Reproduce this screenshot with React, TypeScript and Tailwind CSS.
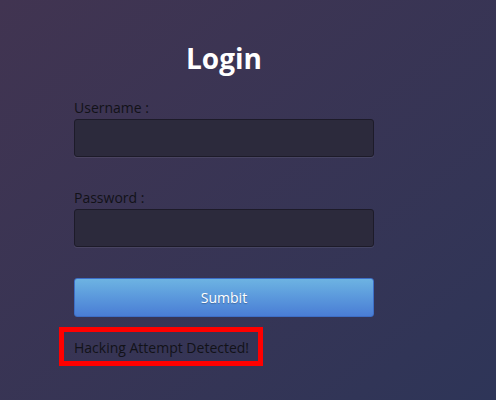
export default function App() {
  return (
    <div
      className="min-h-[400px] w-full bg-gradient-to-br from-[#413451] to-[#2e3558] text-[14px] text-[#121218]"
      style={{ fontFamily: '"Open Sans", "Noto Sans", sans-serif' }}
    >
      <div className="ml-[74px] w-[300px] pt-[36px]">
        <h1 className="text-center text-[28px] font-bold leading-[44px] text-white">Login</h1>

        <form className="mt-[18px]" onSubmit={(e) => e.preventDefault()}>
          <label className="block leading-[19px]">Username :</label>
          <input
            type="text"
            className="mt-[2px] block h-[38px] w-[300px] rounded-[3px] border border-[#1d1b29] bg-[#2c2a3c] px-2 text-white shadow-[0_1px_0_rgba(255,255,255,0.08)] outline-none"
          />

          <label className="mt-[31px] block leading-[19px]">Password :</label>
          <input
            type="password"
            className="mt-[2px] block h-[38px] w-[300px] rounded-[3px] border border-[#1d1b29] bg-[#2c2a3c] px-2 text-white shadow-[0_1px_0_rgba(255,255,255,0.08)] outline-none"
          />

          <button
            type="submit"
            className="mt-[31px] block h-[39px] w-[300px] rounded-[3px] border border-[#3d6ec6] bg-gradient-to-b from-[#6db3e2] to-[#4a7dd5] text-[14px] text-white [text-shadow:0_1px_1px_rgba(0,0,0,0.25)]"
          >
            Sumbit
          </button>
        </form>
      </div>

      <div className="ml-[59px] mt-[10px] flex h-[39px] w-[204px] items-center border-[5px] border-[#ff0000] pl-[10px] pt-[2px]">
        Hacking Attempt Detected!
      </div>
    </div>
  )
}
